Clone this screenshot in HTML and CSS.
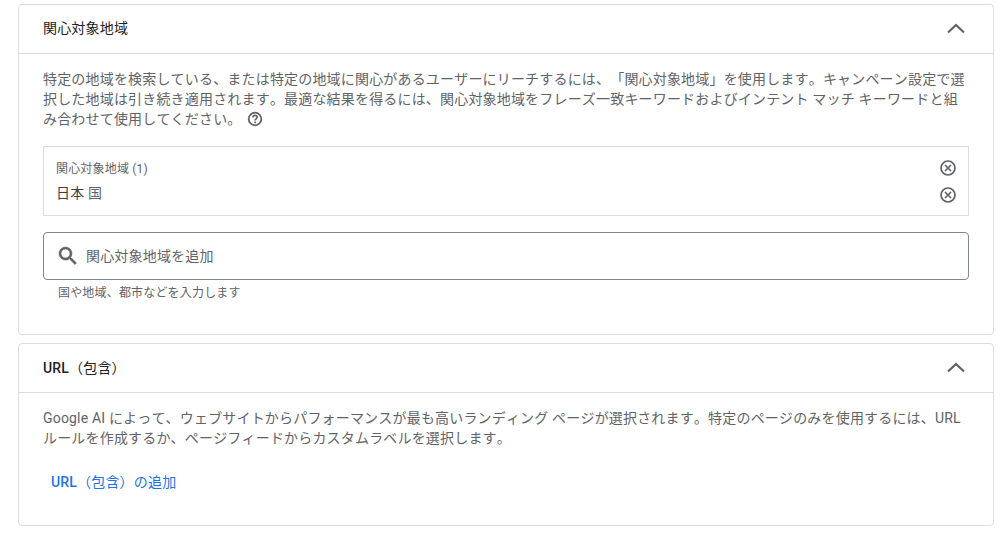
FILE: index.html
```html
<!DOCTYPE html>
<html lang="ja">
<head>
    <meta charset="UTF-8">
    <meta name="viewport" content="width=device-width, initial-scale=1.0">
    <title>関心対象地域</title>
    <link rel="stylesheet" href="styles.css">
</head>
<body>
    <section class="panel panel-geo">
        <div class="panel-header">
            <h2>関心対象地域</h2>
            <svg class="chevron" width="24" height="24" viewBox="0 0 24 24"><path d="M4 15.500 12 8l8 7.500" fill="none" stroke="#5f6368" stroke-width="2.200"/></svg>
        </div>
        <div class="panel-body">
            <p class="desc">特定の地域を検索している、または特定の地域に関心があるユーザーにリーチするには、「関心対象地域」を使用します。キャンペーン設定で選択した地域は引き続き適用されます。最適な結果を得るには、関心対象地域をフレーズ一致キーワードおよびインテント マッチ キーワードと組み合わせて使用してください。<svg class="help" width="16" height="16" viewBox="0 0 24 24"><circle cx="12" cy="12" r="9.500" fill="none" stroke="#5f6368" stroke-width="2.600"/><path d="M8.800 9.800a3.200 3.200 0 0 1 6.400 0c0 2-3.200 2.200-3.200 4.500" fill="none" stroke="#5f6368" stroke-width="2.400"/><rect x="10.700" y="15.800" width="2.600" height="2.600" fill="#5f6368"/></svg></p>

            <div class="selected">
                <div class="selected-row selected-title">
                    <span>関心対象地域 (1)</span>
                    <svg class="remove" width="18" height="18" viewBox="0 0 18 18"><circle cx="9" cy="9" r="7" fill="none" stroke="#5f6368" stroke-width="1.700"/><path d="m6 6 6 6m0-6-6 6" stroke="#5f6368" stroke-width="1.700"/></svg>
                </div>
                <div class="selected-row selected-item">
                    <span>日本 <span class="geo-type">国</span></span>
                    <svg class="remove" width="18" height="18" viewBox="0 0 18 18"><circle cx="9" cy="9" r="7" fill="none" stroke="#5f6368" stroke-width="1.700"/><path d="m6 6 6 6m0-6-6 6" stroke="#5f6368" stroke-width="1.700"/></svg>
                </div>
            </div>

            <div class="search">
                <svg width="24" height="24" viewBox="0 0 24 24"><path fill="#5f6368" stroke="#5f6368" stroke-width="0.600" d="M15.500 14h-.79l-.28-.27A6.470 6.470 0 0 0 16 9.500 6.500 6.500 0 1 0 9.500 16c1.610 0 3.090-.59 4.230-1.570l.27.28v.79l5 4.990L20.490 19l-4.990-5zm-6 0C7.010 14 5 11.990 5 9.500S7.010 5 9.500 5 14 7.010 14 9.500 11.990 14 9.500 14z"/></svg>
                <span>関心対象地域を追加</span>
            </div>
            <div class="hint">国や地域、都市などを入力します</div>
        </div>
    </section>

    <section class="panel panel-url">
        <div class="panel-header">
            <h2><span class="latin">URL</span>（包含）</h2>
            <svg class="chevron" width="24" height="24" viewBox="0 0 24 24"><path d="M4 15.500 12 8l8 7.500" fill="none" stroke="#5f6368" stroke-width="2.200"/></svg>
        </div>
        <div class="panel-body">
            <p class="desc">Google AI によって、ウェブサイトからパフォーマンスが最も高いランディング ページが選択されます。特定のページのみを使用するには、URL ルールを作成するか、ページフィードからカスタムラベルを選択します。</p>
            <a class="add-link" href="#"><span class="latin">URL</span>（包含）の追加</a>
        </div>
    </section>
</body>
</html>
```

FILE: styles.css
```css
* {
    margin: 0;
    padding: 0;
    box-sizing: border-box;
}

body {
    font-family: Roboto, "Noto Sans CJK JP", sans-serif;
    font-kerning: none;
    text-spacing-trim: space-all;
    letter-spacing: 0.18px;
    background-color: white;
    color: #5f6368;
    font-size: 14px;
    padding: 4px 10px 0 18px;
}

.panel {
    border: 1px solid #dadce0;
    border-radius: 4px;
    margin-bottom: 8px;
}

.panel-geo {
    height: 331px;
}

.panel-url {
    height: 183px;
}

.panel-header {
    height: 49px;
    display: flex;
    align-items: center;
    justify-content: space-between;
    padding: 0 25px 0 24px;
    border-bottom: 1px solid #dadce0;
}

.panel-header h2 {
    font-size: 14px;
    font-weight: 400;
    line-height: 20px;
    color: #202124;
    margin-top: -2px;
}

.panel-url .panel-header h2 {
    margin-top: 0;
}

.latin {
    font-weight: 500;
}

.panel-body {
    padding: 15px 24px 0;
}

.desc {
    line-height: 20px;
    width: 925px;
}

.help {
    margin-left: 5px;
    vertical-align: -3px;
}

.selected {
    margin-top: 17px;
    height: 70px;
    border: 1px solid #dadce0;
    padding: 12px 11px 0 12px;
}

.selected-row {
    display: flex;
    align-items: center;
    justify-content: space-between;
}

.selected-title {
    font-size: 12px;
    height: 18px;
}

.selected-title span {
    margin-top: -2px;
}

.selected-item {
    margin-top: 9px;
    height: 18px;
    color: #3c4043;
}

.selected-item span {
    margin-top: -7px;
}

.selected-item .geo-type {
    margin-top: 0;
    color: #5f6368;
}

.search {
    margin-top: 16px;
    height: 48px;
    border: 1px solid #80868b;
    border-radius: 4px;
    display: flex;
    align-items: center;
    gap: 6px;
    padding-left: 12px;
}

.search span {
    margin-top: -3px;
}

.hint {
    font-size: 12px;
    margin-top: 5px;
    padding-left: 15px;
    line-height: 16px;
}

.add-link {
    display: inline-block;
    margin: 24px 0 0 8px;
    color: #1a73e8;
    text-decoration: none;
    line-height: 20px;
}
```
